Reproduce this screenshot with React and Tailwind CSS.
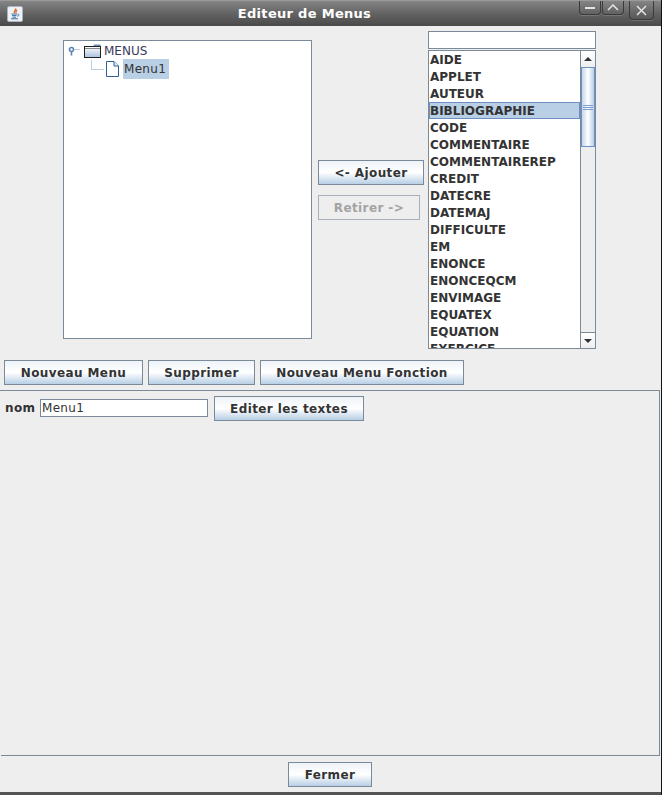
const FONT = 'font-["DejaVu_Sans",sans-serif]'

const ITEMS = [
  'AIDE', 'APPLET', 'AUTEUR', 'BIBLIOGRAPHIE', 'CODE', 'COMMENTAIRE', 'COMMENTAIREREP',
  'CREDIT', 'DATECRE', 'DATEMAJ', 'DIFFICULTE', 'EM', 'ENONCE', 'ENONCEQCM',
  'ENVIMAGE', 'EQUATEX', 'EQUATION', 'EXERCICE',
]

function Button({ children, className = '', disabled = false }) {
  return (
    <div
      className={`flex items-center justify-center h-[25px] border shrink-0 text-[12px] font-bold tracking-[0.4px] ${
        disabled
          ? 'border-[#a9afb7] text-[#a3a3a3] bg-[#eeeeee]'
          : 'border-[#7a8a99] text-[#333333] bg-gradient-to-b from-[#eef3f8] via-[#ffffff] to-[#b8cfe5]'
      } ${className}`}
    >
      {children}
    </div>
  )
}

function WindowButton({ className = '', children }) {
  return (
    <div className={`flex items-center justify-center border border-[#3a3a3a] rounded-b-[4px] border-t-0 shadow-[0_1px_0_rgba(255,255,255,0.15)] ${className}`}>
      {children}
    </div>
  )
}

function JavaIcon() {
  return (
    <div className="w-[16px] h-[16px] bg-[#eef2f6] border border-[#a9b4bf] rounded-[2px] flex items-center justify-center">
      <svg width="12" height="12" viewBox="0 0 12 12" fill="none">
        <path d="M6.5 0.5C7.5 2 4.5 3 5.5 5" stroke="#e0601c" strokeWidth="1.4" />
        <path d="M8 2C7 3 6.5 3.5 7 5" stroke="#e0601c" strokeWidth="1.1" />
        <path d="M2.5 6H8M3 7.6H7.5M3.5 9.2H7M2 10.8H9" stroke="#3f6f9f" strokeWidth="1" />
        <path d="M8.5 6C10.5 5.8 10.5 8 8 8.2" stroke="#3f6f9f" strokeWidth="0.9" />
      </svg>
    </div>
  )
}

function FolderIcon() {
  return (
    <svg width="17" height="14" viewBox="0 0 17 14" fill="none" className="shrink-0">
      <defs>
        <linearGradient id="folder" x1="0" y1="0" x2="0" y2="1">
          <stop offset="0" stopColor="#ffffff" />
          <stop offset="1" stopColor="#a9c2de" />
        </linearGradient>
      </defs>
      <path d="M10 0.5H16.5V3H9Z" fill="#6d8fb8" />
      <rect x="0.5" y="2.5" width="16" height="11" fill="url(#folder)" stroke="#222222" />
      <path d="M1 4.5H16" stroke="#8a8a8a" />
    </svg>
  )
}

function FileIcon() {
  return (
    <svg width="13" height="16" viewBox="0 0 13 16" fill="none" className="shrink-0">
      <path d="M0.5 0.5H8L12.5 5V15.5H0.5Z" fill="#ffffff" stroke="#2f5f94" />
      <path d="M8 0.5V5H12.5" stroke="#2f5f94" fill="#e6edf5" />
    </svg>
  )
}

function Tree() {
  return (
    <div className="w-[249px] h-[299px] mt-[14px] bg-white border border-[#7a8a99] text-[12px] text-[#333333] shrink-0">
      <div className="flex items-center h-[18px] mt-[1px] pl-[4px]">
        <svg width="13" height="10" viewBox="0 0 13 10" fill="none" className="shrink-0">
          <circle cx="3.5" cy="3.5" r="2" stroke="#5c83b5" strokeWidth="1.6" />
          <path d="M3.5 5.5V9.5" stroke="#5c83b5" strokeWidth="1.6" />
          <path d="M6 3.5H12" stroke="#b8cfe5" />
        </svg>
        <div className="ml-[3px]"><FolderIcon /></div>
        <span className="ml-[3px] text-[#3a3a5a]">MENUS</span>
      </div>
      <div className="flex items-center h-[18px] pl-[27px]">
        <div className="w-[13px] h-[10px] -mt-[9px] border-l border-b border-[#b8cfe5] shrink-0" />
        <div className="ml-[2px]"><FileIcon /></div>
        <span className="ml-[4px] px-[1px] w-[46px] h-[20px] flex items-center bg-[#b8cfe5] tracking-[0.3px]">Menu1</span>
      </div>
    </div>
  )
}

function ScrollBar() {
  return (
    <div className="w-[15px] h-full flex flex-col bg-[#eeeeee] border-l border-[#7a8a99] shrink-0">
      <div className="h-[16px] flex items-center justify-center bg-gradient-to-b from-[#ffffff] to-[#eeeeee]">
        <div className="w-0 h-0 border-x-[4px] border-x-transparent border-b-[4px] border-b-[#333333]" />
      </div>
      <div className="h-[80px] flex flex-col items-center justify-center gap-[1px] border border-[#6d8fc4] bg-gradient-to-r from-[#c4d6ea] via-[#ffffff] to-[#b8cfe5]">
        <div className="w-[10px] h-px bg-[#7f9fd0]" />
        <div className="w-[10px] h-px bg-[#7f9fd0]" />
        <div className="w-[10px] h-px bg-[#7f9fd0]" />
      </div>
      <div className="flex-1" />
      <div className="h-[16px] flex items-center justify-center border-t border-[#7a8a99] bg-gradient-to-b from-[#ffffff] to-[#eeeeee]">
        <div className="w-0 h-0 border-x-[4px] border-x-transparent border-t-[4px] border-t-[#333333]" />
      </div>
    </div>
  )
}

function ItemList() {
  return (
    <div className="w-[168px] h-[299px] mt-[1px] flex bg-white border border-[#7a8a99] overflow-hidden">
      <div className="flex-1 overflow-hidden">
        {ITEMS.map(item => (
          <div
            key={item}
            className={`h-[17px] flex items-center text-[12px] font-bold leading-none text-[#333333] ${
              item === 'BIBLIOGRAPHIE' ? 'bg-[#b8cfe5] border border-[#6d8fc4]' : 'pl-[1px]'
            }`}
          >
            {item}
          </div>
        ))}
      </div>
      <ScrollBar />
    </div>
  )
}

export default function App() {
  return (
    <div className={`${FONT} w-[662px] h-[795px] flex flex-col bg-[#eeeeee] border-r border-[#111111] overflow-hidden`}>
      <div className="h-[26px] shrink-0 flex items-center pl-[7px] pr-[7px] border-t border-[#9a9a9a] bg-gradient-to-b from-[#858585] via-[#636363] to-[#4a4a4a]">
        <JavaIcon />
        <div className="flex-1 text-center pl-[7px] text-[13px] font-bold text-white tracking-[0.3px]">Editeur de Menus</div>
        <div className="flex self-start gap-[1px] items-start">
          <WindowButton className="w-[22px] h-[14px]">
            <div className="w-[10px] h-[2px] bg-[#e4e4e4]" />
          </WindowButton>
          <WindowButton className="w-[22px] h-[14px]">
            <svg width="12" height="7" viewBox="0 0 12 7" fill="none">
              <path d="M1 6L6 1L11 6" stroke="#e4e4e4" strokeWidth="1.5" />
            </svg>
          </WindowButton>
          <WindowButton className="w-[25px] h-[19px] ml-[4px]">
            <svg width="11" height="11" viewBox="0 0 11 11" fill="none">
              <path d="M1 1L10 10M10 1L1 10" stroke="#e4e4e4" strokeWidth="1.5" />
            </svg>
          </WindowButton>
        </div>
      </div>

      <div className="flex pl-[63px] h-[323px] shrink-0">
        <Tree />
        <div className="w-[106px] ml-[6px] pt-[134px] flex flex-col items-start gap-[10px]">
          <Button className="w-[106px]">&lt;- Ajouter</Button>
          <Button className="w-[102px]" disabled>Retirer -&gt;</Button>
        </div>
        <div className="ml-[4px] pt-[5px]">
          <div className="w-[168px] h-[18px] bg-white border border-[#7a8a99]" />
          <ItemList />
        </div>
      </div>

      <div className="flex pl-[4px] gap-[5px] mt-[11px] shrink-0">
        <Button className="w-[139px]">Nouveau Menu</Button>
        <Button className="w-[107px]">Supprimer</Button>
        <Button className="w-[204px]">Nouveau Menu Fonction</Button>
      </div>

      <div className="flex-1 mt-[5px] mr-[1px] border-t border-r border-[#7a8a99] flex flex-col">
        <div className="flex-1 flex items-start pt-[5px] pl-[5px]">
          <span className="text-[12px] font-bold tracking-[0.4px] text-[#333333] mt-[3px] w-[35px] shrink-0">nom</span>
          <div className="w-[168px] h-[18px] mt-[3px] px-[1px] flex items-center bg-white border border-[#7a8a99] text-[12px] text-[#333333] tracking-[0.3px] shrink-0">Menu1</div>
          <Button className="w-[150px] ml-[6px]">Editer les textes</Button>
        </div>
        <div className="h-px ml-[1px] bg-[#7a8a99] shrink-0" />
      </div>

      <div className="h-[36px] shrink-0 flex justify-center pt-[6px] pr-[1px]">
        <Button className="w-[84px]">Fermer</Button>
      </div>
      <div className="h-[3px] shrink-0 bg-[#555555]" />
    </div>
  )
}
